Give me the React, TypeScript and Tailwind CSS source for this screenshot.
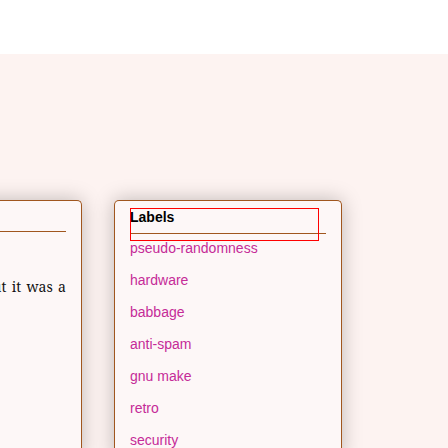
const labels = [
  'pseudo-randomness',
  'hardware',
  'babbage',
  'anti-spam',
  'gnu make',
  'retro',
  'security',
];

function Article() {
  return (
    <article className="-ml-8 min-w-0 flex-1 rounded-[5px] border border-b-0 border-[#a0561e] bg-[#fdf7f7] px-[15px] shadow-[0_0_20px_rgba(0,0,0,0.25)]">
      <div className="h-[31px] border-b border-[#a0561e]" />
      <p className="mt-[43px] text-justify font-['Noto_Serif','DejaVu_Serif',serif] text-[14px] leading-6 whitespace-nowrap text-[#111111] [text-align-last:justify]">
        but it was a
      </p>
    </article>
  );
}

function LabelsPanel() {
  return (
    <aside className="w-[228px] shrink-0 rounded-t-[5px] border border-b-0 border-[#a0561e] bg-[#fdf7f7] px-[15px] pt-[7px] font-['Liberation_Sans',Arial,sans-serif] text-[14px] shadow-[0_0_20px_rgba(0,0,0,0.25)]">
      <div className="relative">
        <h2 className="h-[26px] border-b border-[#a0561e] leading-[18px] font-bold text-black">
          Labels
        </h2>
        <div className="pointer-events-none absolute top-0 right-[7px] left-0 h-[33px] border border-[#ff0000]" />
      </div>
      <ul>
        {labels.map((label) => (
          <li key={label} className="h-8 leading-7">
            <a href="#" className="text-[#c52b98]">
              {label}
            </a>
          </li>
        ))}
      </ul>
    </aside>
  );
}

export default function App() {
  return (
    <div className="flex h-screen flex-col overflow-hidden bg-[#fdf3f1]">
      <header className="h-[54px] shrink-0 bg-white" />
      <main className="flex flex-1 gap-8 pt-[146px] pr-[106px]">
        <Article />
        <LabelsPanel />
      </main>
    </div>
  );
}
